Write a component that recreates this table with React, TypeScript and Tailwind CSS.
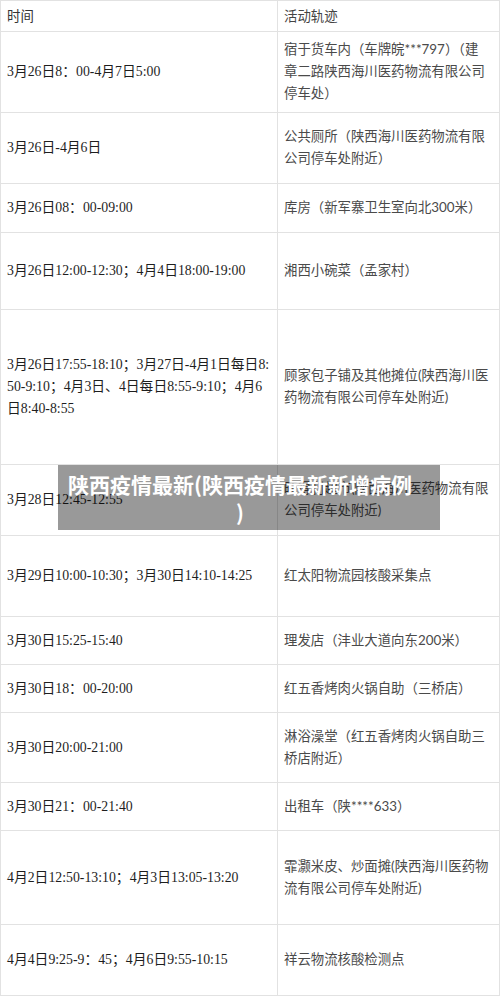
// 陕西疫情 — 活动轨迹表（带标题遮罩）
type Row = { h: number; time: string[]; place: string[] };

const rows: Row[] = [
  { h: 81, time: ["3月26日8：00-4月7日5:00"], place: ["宿于货车内（车牌皖***797）（建", "章二路陕西海川医药物流有限公司", "停车处）"] },
  { h: 71, time: ["3月26日-4月6日"], place: ["公共厕所（陕西海川医药物流有限", "公司停车处附近）"] },
  { h: 49, time: ["3月26日08：00-09:00"], place: ["库房（新军寨卫生室向北300米）"] },
  { h: 77, time: ["3月26日12:00-12:30；4月4日18:00-19:00"], place: ["湘西小碗菜（孟家村）"] },
  {
    h: 155,
    time: ["3月26日17:55-18:10；3月27日-4月1日每日8:", "50-9:10；4月3日、4日每日8:55-9:10；4月6", "日8:40-8:55"],
    place: ["顾家包子铺及其他摊位(陕西海川医", "药物流有限公司停车处附近)"],
  },
  { h: 71, time: ["3月28日12:45-12:55"], place: ["旺得利超市(陕西海川医药物流有限", "公司停车处附近)"] },
  { h: 81, time: ["3月29日10:00-10:30；3月30日14:10-14:25"], place: ["红太阳物流园核酸采集点"] },
  { h: 48, time: ["3月30日15:25-15:40"], place: ["理发店（沣业大道向东200米）"] },
  { h: 48, time: ["3月30日18：00-20:00"], place: ["红五香烤肉火锅自助（三桥店）"] },
  { h: 70, time: ["3月30日20:00-21:00"], place: ["淋浴澡堂（红五香烤肉火锅自助三", "桥店附近）"] },
  { h: 48, time: ["3月30日21：00-21:40"], place: ["出租车（陕****633）"] },
  { h: 94, time: ["4月2日12:50-13:10；4月3日13:05-13:20"], place: ["霏灏米皮、炒面摊(陕西海川医药物", "流有限公司停车处附近)"] },
  { h: 71, time: ["4月4日9:25-9：45；4月6日9:55-10:15"], place: ["祥云物流核酸检测点"] },
];

function Lines({ lines }: { lines: string[] }) {
  return (
    <div>
      {lines.map((l, i) => (
        <div key={i} className="whitespace-nowrap">{l}</div>
      ))}
    </div>
  );
}

export default function App() {
  return (
    <div className="relative w-[500px] h-[996px] bg-white overflow-hidden text-[13.4px] leading-[21.7px]">
      <div className="w-[500px] border-t border-l border-[#e2e2e2]">
        <div className="flex h-[31px] border-b border-[#e2e2e2]">
          <div className="w-[277px] shrink-0 flex items-center px-[6px] border-r border-[#e2e2e2] text-[#333] font-['Noto_Sans_CJK_SC',sans-serif]">时间</div>
          <div className="flex-1 flex items-center px-[6px] border-r border-[#e2e2e2] text-[#444] font-['Noto_Sans_CJK_SC',sans-serif]">活动轨迹</div>
        </div>
        {rows.map((r, i) => (
          <div key={i} className="flex border-b border-[#e2e2e2]" style={{ height: r.h }}>
            <div className="w-[277px] shrink-0 flex items-center px-[6px] border-r border-[#e2e2e2] text-[#1e1e1e] text-[13.8px] font-['Liberation_Serif','Noto_Sans_CJK_SC',serif]">
              <Lines lines={r.time} />
            </div>
            <div className="flex-1 flex items-center px-[6px] border-r border-[#e2e2e2] text-[#4a4a4a] font-['Lato','Noto_Sans_CJK_SC',sans-serif]">
              <Lines lines={r.place} />
            </div>
          </div>
        ))}
      </div>

      {/* 标题遮罩 */}
      <div className="absolute left-[58px] top-[465px] w-[382px] h-[65px] bg-black/40 flex items-center justify-center pr-[18px]">
        <div className="text-center text-white font-bold text-[21px] leading-[28px] font-['Noto_Sans_CJK_SC',sans-serif]">
          陕西疫情最新(陕西疫情最新新增病例
          <br />)
        </div>
      </div>
    </div>
  );
}
